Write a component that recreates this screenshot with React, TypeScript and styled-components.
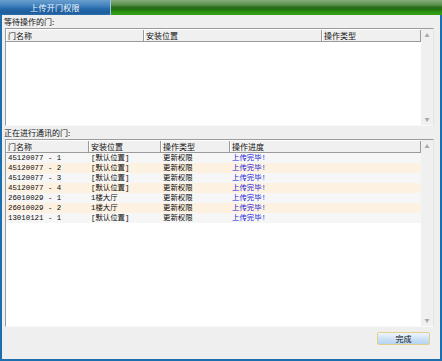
import styled, { createGlobalStyle } from "styled-components";

const GlobalStyle = createGlobalStyle`
  html, body { margin:0; padding:0; background:#ffffff; }
  body { font-family: "Noto Sans CJK SC", "DejaVu Sans", sans-serif; }
`

type Col = { title: string; width: number }

const waitCols: Col[] = [
    { title: "门名称", width: 138 },
    { title: "安装位置", width: 178 },
    { title: "操作类型", width: 99 },
]

const runCols: Col[] = [
    { title: "门名称", width: 83 },
    { title: "安装位置", width: 72 },
    { title: "操作类型", width: 69 },
    { title: "操作进度", width: 191 },
]

const rows = [
    ["45120077 - 1", "[默认位置]", "更新权限", "上传完毕!"],
    ["45120077 - 2", "[默认位置]", "更新权限", "上传完毕!"],
    ["45120077 - 3", "[默认位置]", "更新权限", "上传完毕!"],
    ["45120077 - 4", "[默认位置]", "更新权限", "上传完毕!"],
    ["26010029 - 1", "1楼大厅", "更新权限", "上传完毕!"],
    ["26010029 - 2", "1楼大厅", "更新权限", "上传完毕!"],
    ["13010121 - 1", "[默认位置]", "更新权限", "上传完毕!"],
]

const App = () => {
  return (
   <>
   <GlobalStyle/>
   <Window>
     <TitleBar>
       <Tab>上传开门权限</Tab>
       <GreenBar/>
     </TitleBar>
     <Body>
       <Label>等待操作的门:</Label>
       <Table $height={98}>
         <Grid>
           <HeadRow>
             {waitCols.map((c)=>(
               <HeadCell key={c.title} $w={c.width}>{c.title}</HeadCell>
             ))}
           </HeadRow>
         </Grid>
         <Scroll>
           <Arrow>▲</Arrow>
           <Arrow>▼</Arrow>
         </Scroll>
       </Table>
       <Label>正在进行通讯的门:</Label>
       <Table $height={188}>
         <Grid>
           <HeadRow>
             {runCols.map((c)=>(
               <HeadCell key={c.title} $w={c.width}>{c.title}</HeadCell>
             ))}
           </HeadRow>
           {rows.map((r,i)=>(
             <Row key={i} $alt={i % 2 === 1}>
               {r.map((v,j)=>(
                 <Cell key={j} $w={runCols[j].width} $done={j === 3}>{v}</Cell>
               ))}
             </Row>
           ))}
         </Grid>
         <Scroll>
           <Arrow>▲</Arrow>
           <Arrow>▼</Arrow>
         </Scroll>
       </Table>
       <Footer>
         <Button>完成</Button>
       </Footer>
     </Body>
   </Window>
   </>
  )
}

export default App;

const Window = styled.div`
  width:442px;
  height:361px;
  display:flex;
  flex-direction:column;
`
const TitleBar = styled.div`
  height:15px;
  display:flex;
`
const Tab = styled.div`
  width:110px;
  border-right:1px solid #9cc4e4;
  background:linear-gradient(#6a9fce 0%, #3f80bd 40%, #2468a8 60%, #1d5d9c 85%, #2a6eae 100%);
  color:#f2f6fa;
  font-size:8px;
  display:flex;
  align-items:center;
  justify-content:center;
  letter-spacing:0.3px;
`
const GreenBar = styled.div`
  flex:1;
  background:linear-gradient(#86ad7c 0%, #5d9250 30%, #2a6c1c 50%, #1f7110 62%, #2c9412 80%, #34a016 100%);
`
const Body = styled.div`
  flex:1;
  display:flex;
  flex-direction:column;
  background:#efefef;
  border:2px solid #1b6fae;
  border-top:none;
  padding:0 6px 0 3px;
`
const Label = styled.div`
  height:13px;
  line-height:13px;
  font-size:8px;
  color:#111;
  margin-left:-1px;
`
const Table = styled.div<{ $height: number }>`
  height:${p => p.$height}px;
  display:flex;
  background:#fff;
  border-top:1px solid #9c9c9c;
  border-left:1px solid #9c9c9c;
  border-right:1px solid #e4e4e4;
  border-bottom:1px solid #fafafa;
  box-sizing:border-box;
`
const Grid = styled.div`
  flex:1;
  display:flex;
  flex-direction:column;
`
const HeadRow = styled.div`
  display:flex;
  height:13px;
  box-sizing:border-box;
  border-top:1px solid #fff;
  background:#f0f0f0;
  border-bottom:1px solid #9a9a9a;
`
const HeadCell = styled.div<{ $w: number }>`
  width:${p => p.$w}px;
  box-sizing:border-box;
  border-right:1px solid #9a9a9a;
  border-left:1px solid #fff;
  font-size:8px;
  line-height:11px;
  padding-left:1px;
  color:#111;
  white-space:nowrap;
`
const Row = styled.div<{ $alt: boolean }>`
  display:flex;
  height:10px;
  background:${p => p.$alt ? "#fdf1e1" : "#f6f6f6"};
`
const Cell = styled.div<{ $w: number; $done: boolean }>`
  width:${p => p.$w}px;
  padding-left:2px;
  box-sizing:border-box;
  font-family:"Liberation Mono", "Noto Sans CJK SC", monospace;
  font-size:7.4px;
  line-height:10px;
  color:${p => p.$done ? "#2424d8" : "#0c0c0c"};
  white-space:nowrap;
`
const Scroll = styled.div`
  width:12px;
  background:#f0f0f0;
  display:flex;
  flex-direction:column;
  justify-content:space-between;
  align-items:center;
  padding:3px 0;
`
const Arrow = styled.div`
  font-size:5px;
  line-height:6px;
  color:#a8a8a8;
`
const Footer = styled.div`
  flex:1;
  display:flex;
  justify-content:flex-end;
  align-items:flex-start;
  padding-top:5px;
`
const Button = styled.button`
  width:53px;
  height:13px;
  margin-right:4px;
  padding:0;
  border:1px solid #e2cf8e;
  border-radius:2px;
  background:linear-gradient(#eef5fd, #c8dff6 60%, #b7d3f1);
  font-family:"Noto Sans CJK SC", sans-serif;
  font-size:8px;
  line-height:11px;
  color:#111;
`
